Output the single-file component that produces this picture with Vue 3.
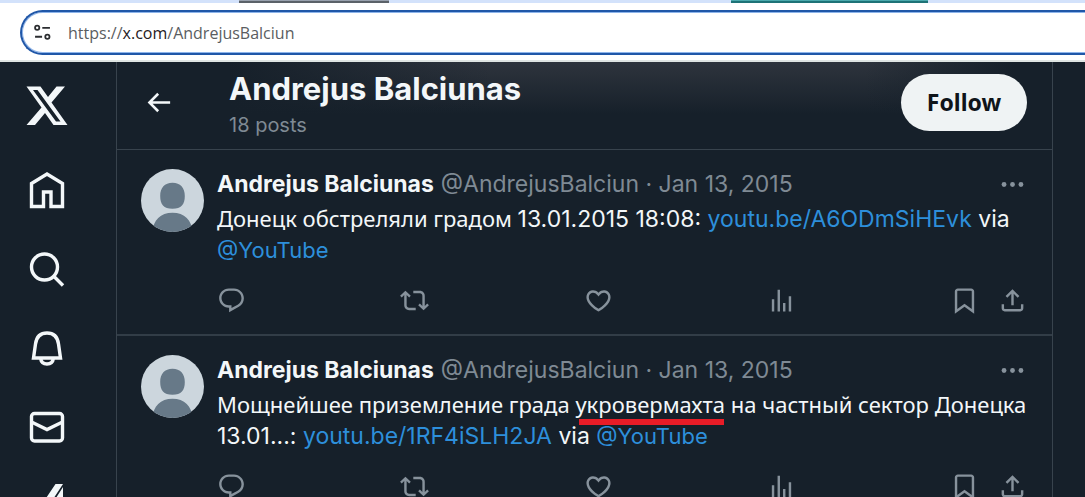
<script setup>
const icons = {
  reply: 'M1.751 10c0-4.42 3.584-8 8.005-8h4.366c4.49 0 8.129 3.64 8.129 8.13 0 2.96-1.607 5.68-4.196 7.11l-8.054 4.46v-3.69h-.067c-4.49.1-8.183-3.51-8.183-8.01zm8.005-6c-3.317 0-6.005 2.69-6.005 6 0 3.37 2.77 6.08 6.138 6.01l.351-.01h1.761v2.3l5.087-2.81c1.951-1.08 3.163-3.13 3.163-5.36 0-3.39-2.744-6.13-6.129-6.13H9.756z',
  repost: 'M4.5 3.88l4.432 4.14-1.364 1.46L5.5 7.55V16c0 1.1.896 2 2 2H13v2H7.5c-2.209 0-4-1.79-4-4V7.55L1.432 9.48.068 8.02 4.5 3.88zM16.5 6H11V4h5.5c2.209 0 4 1.79 4 4v8.45l2.068-1.93 1.364 1.46-4.432 4.14-4.432-4.14 1.364-1.46 2.068 1.93V8c0-1.1-.896-2-2-2z',
  like: 'M16.697 5.5c-1.222-.06-2.679.51-3.89 2.16l-.805 1.09-.806-1.09C9.984 6.01 8.526 5.44 7.304 5.5c-1.243.07-2.349.78-2.91 1.91-.552 1.12-.633 2.78.479 4.82 1.074 1.97 3.257 4.27 7.129 6.61 3.87-2.34 6.052-4.64 7.126-6.61 1.111-2.04 1.03-3.7.477-4.82-.561-1.13-1.666-1.84-2.908-1.91zm4.187 7.69c-1.351 2.48-4.001 5.12-8.379 7.67l-.503.3-.504-.3c-4.379-2.55-7.029-5.19-8.382-7.67-1.36-2.5-1.41-4.86-.514-6.67.887-1.79 2.647-2.91 4.601-3.01 1.651-.09 3.368.56 4.798 2.01 1.429-1.45 3.146-2.1 4.796-2.01 1.954.1 3.714 1.22 4.601 3.01.896 1.81.846 4.17-.514 6.67z',
  views: 'M8.75 21V3h2v18h-2zM18 21V8.5h2V21h-2zM4 21l.004-10h2L6 21H4zm9.248 0v-7h2v7h-2z',
  bookmark: 'M4 4.5C4 3.12 5.119 2 6.5 2h11C18.881 2 20 3.12 20 4.5v18.44l-8-5.71-8 5.71V4.5zM6.5 4c-.276 0-.5.22-.5.5v14.56l6-4.29 6 4.29V4.5c0-.28-.224-.5-.5-.5h-11z',
  share: 'M12 2.59l5.7 5.7-1.41 1.42L13 6.41V16h-2V6.41l-3.3 3.3-1.41-1.42L12 2.59zM21 15l-.02 3.51c0 1.38-1.12 2.49-2.5 2.49H5.5C4.11 21 3 19.88 3 18.5V15h2v3.5c0 .28.22.5.5.5h12.98c.28 0 .5-.22.5-.5L19 15h2z',
}
const actions = [
  ['Reply', 'reply'],
  ['Repost', 'repost'],
  ['Like', 'like'],
  ['Views', 'views'],
]
const saveActions = [
  ['Bookmark', 'bookmark'],
  ['Share', 'share'],
]
const posts = [
  {
    id: 1,
    parts: [
      { kind: 'cyr', text: 'Донецк обстреляли градом ' },
      { kind: 'num', text: '13.01.2015 18:08: ' },
      { kind: 'link', text: 'youtu.be/A6ODmSiHEvk' },
      { kind: 'num', text: ' via ' },
      { kind: 'link mention', text: '@YouTube' },
    ],
  },
  {
    id: 2,
    parts: [
      { kind: 'cyr', text: 'Мощнейшее приземление града ' },
      { kind: 'cyr marked', text: 'укровермахта' },
      { kind: 'cyr', text: ' на частный сектор Донецка ' },
      { kind: 'num', text: '13.01...: ' },
      { kind: 'link', text: 'youtu.be/1RF4iSLH2JA' },
      { kind: 'num', text: ' via ' },
      { kind: 'link mention', text: '@YouTube' },
    ],
  },
]
</script>

<template>
  <div class="window">
    <div class="tabs"><span class="tab gray"></span><span class="tab teal"></span></div>
    <div class="toolbar">
      <div class="address">
        <svg class="tune" viewBox="0 0 16 16" fill="none" stroke="#2b2d30" stroke-width="1.7" aria-hidden="true">
          <circle cx="3" cy="3.6" r="2" /><path d="M7.8 3.6H15M1 12h6.6" /><circle cx="12.6" cy="12" r="2" />
        </svg>
        <a class="url" href="#">https://<b>x.com</b>/AndrejusBalciun</a>
      </div>
    </div>
    <div class="app">
      <nav class="side" aria-label="Primary">
        <a class="logo" href="#" aria-label="X">
          <svg viewBox="0 0 44 44"><path fill-rule="evenodd" d="M1.500 2.500H15.500L23 13 31.500 2.500H40L26.500 18.500 42.500 41H28.500L20 29 10 41H1.500L16.500 23.500zM8 6 31 37.500h4.500L12.500 6z" /></svg>
        </a>
        <a href="#" aria-label="Home">
          <svg viewBox="0 0 44 44" class="line"><path d="M6.500 15.500 22 6l15.500 9.500V38.500H26V24h-7.500v14.500h-12z" /></svg>
        </a>
        <a href="#" aria-label="Search">
          <svg viewBox="0 0 44 44" class="line"><circle cx="19.500" cy="20" r="13" /><path d="M28.500 29 38 38.500" /></svg>
        </a>
        <a href="#" aria-label="Notifications">
          <svg viewBox="0 0 44 44" class="line"><path d="M8.500 32 10.500 18C11.500 10.500 16 7 22 7s10.500 3.500 11.500 11l2 14zM15.500 32c.5 3.700 3 6 6.500 6s6-2.300 6.500-6" /></svg>
        </a>
        <a href="#" aria-label="Messages">
          <svg viewBox="0 0 44 44" class="line"><rect x="6.500" y="8.500" width="31" height="27.500" rx="3" /><path d="M6.500 17 22 24.500 37.500 17" /></svg>
        </a>
        <a href="#" aria-label="Grok">
          <svg viewBox="0 0 44 44"><path d="M30.500 0H38L17 32H9zM38 3v29H19.500z" /></svg>
        </a>
      </nav>
      <main class="column">
        <header class="head">
          <button class="back" aria-label="Back">
            <svg viewBox="0 0 24 24"><path d="M7.414 13l5.043 5.040-1.414 1.420L3.586 12l7.457-7.460 1.414 1.420L7.414 11H21v2H7.414z" /></svg>
          </button>
          <div class="who">
            <h1>Andrejus Balciunas</h1>
            <p>18 posts</p>
          </div>
          <button class="follow">Follow</button>
        </header>
        <article v-for="post in posts" :key="post.id" class="post">
          <svg class="avatar" viewBox="0 0 64 64" role="img" aria-label="Andrejus Balciunas">
            <defs><clipPath :id="'face' + post.id"><circle cx="32" cy="32" r="32" /></clipPath></defs>
            <g :clip-path="'url(#face' + post.id + ')'">
              <rect width="64" height="64" fill="#ccd6dd" />
              <path fill="#677988" d="M32 14c8 0 12.500 5 12.500 13.500S41 40.500 32 40.500 19.500 36 19.500 27.500 24 14 32 14zM12 64c0-12 8-19.500 20-19.500S52 52 52 64z" />
            </g>
          </svg>
          <div class="content">
            <div class="meta">
              <a class="name" href="#">Andrejus Balciunas</a>
              <span class="handle">@AndrejusBalciun · Jan 13, 2015</span>
              <button class="more" aria-label="More">
                <svg viewBox="0 0 24 24"><circle cx="5" cy="12" r="2" /><circle cx="12" cy="12" r="2" /><circle cx="19" cy="12" r="2" /></svg>
              </button>
            </div>
            <p class="text"><template v-for="(p, i) in post.parts" :key="i"><a v-if="p.kind.startsWith('link')" :class="p.kind" href="#">{{ p.text }}</a><span v-else :class="p.kind">{{ p.text }}</span></template></p>
            <div class="actions">
              <button v-for="a in actions" :key="a[1]" :aria-label="a[0]"><svg viewBox="0 0 24 24"><path :d="icons[a[1]]" /></svg></button>
              <div class="saves">
                <button v-for="a in saveActions" :key="a[1]" :aria-label="a[0]"><svg viewBox="0 0 24 24"><path :d="icons[a[1]]" /></svg></button>
              </div>
            </div>
          </div>
        </article>
      </main>
    </div>
  </div>
</template>

<style>
html, body { margin: 0; background: #16202a; }
#app { height: 100vh; overflow: hidden; }
</style>

<style scoped>
.window { height: 100%; display: flex; flex-direction: column; overflow: hidden; font-family: Inter, "Liberation Sans", sans-serif; }
a { color: inherit; text-decoration: none; }
button { display: flex; align-items: center; justify-content: center; margin: 0; padding: 0; border: 0; background: none; color: inherit; cursor: pointer; }
svg { display: block; fill: currentColor; }
h1, p { margin: 0; }

.tabs { display: grid; grid-template-columns: 22% 150px 1fr 197px 14.5%; height: 3px; flex: none; background: #d3e2fb; }
.tab { box-sizing: border-box; border-top: 1px solid #98a1ae; background: #5b6269; }
.gray { grid-column: 2; }
.teal { grid-column: 4; border-color: #4ba9ad; background: #1e7377; }
.toolbar { flex: none; padding: 7px 0 5px 20px; background: #fff; border-bottom: 2px solid #dfe5e3; }
.address { display: flex; align-items: center; box-sizing: border-box; height: 45px; margin-right: -2px; padding-left: 12px; gap: 17px; border: 2px solid #2057a8; border-right: 0; border-radius: 23px 0 0 23px; box-shadow: inset 0 0 0 1px #8db4ea; }
.tune { width: 17px; height: 17px; fill: none; }
.url { font: 16px/24px "Open Sans", "Noto Sans", sans-serif; color: #5a5d61; }
.url b { font-weight: 400; color: #1f2023; }

.app { flex: 1; min-height: 0; display: flex; background: #16202a; color: #f3f7f9; }
.side { flex: none; width: 116px; box-sizing: border-box; padding: 22px 0 0 25px; display: flex; flex-direction: column; gap: 35px; }
.side svg { width: 44px; height: 44px; }
.side .line { fill: none; stroke: currentColor; stroke-width: 3.4; }
.logo { margin-bottom: 5px; }
.column { flex: 1; min-width: 0; margin-right: 32px; border: solid #38434d; border-width: 0 1px; height: max-content; }
.head { display: flex; align-items: center; box-sizing: border-box; height: 88px; padding: 0 25px 6px 26px; border-bottom: 1px solid #38434d; background: linear-gradient(to right, #16202a 12%, transparent 40%, transparent 80%, #16202a 96%), linear-gradient(#2e343d, #16202a 60%); }
.back svg { width: 31px; height: 31px; }
.who { flex: 1; margin-left: 55px; padding-top: 8px; }
.who h1 { font-size: 31px; line-height: 36px; font-weight: 700; }
.who p { font-size: 20px; line-height: 36px; color: #7f8a94; }
.follow { width: 126px; height: 57px; padding-bottom: 2px; border-radius: 29px; background: #eff3f4; color: #0f1419; font: 700 23px/30px "Noto Sans", sans-serif; }

.post { display: flex; gap: 13px; padding: 19px 25px 19px 24px; border-bottom: 2px solid #323d47; }
.avatar { flex: none; width: 63px; height: 63px; }
.content { flex: 1; min-width: 0; }
.meta { display: flex; gap: 7px; font-size: 23px; line-height: 31px; height: 31px; white-space: nowrap; }
.name { font-weight: 700; }
.handle { color: #7f8a94; }
.more { margin-left: auto; }
.more svg, .actions svg { width: 29px; height: 29px; }
.more, .actions { color: #87929c; }
.text { margin-top: 3px; font-size: 23px; line-height: 31px; }
.text a { color: #2d8fdb; }
.text .cyr { font-family: "Noto Sans", sans-serif; font-size: 22px; }
.text .mention { font-size: 22px; }
.marked { position: relative; }
.marked::after { content: ""; position: absolute; left: 4px; right: 1px; bottom: -6px; height: 6px; background: #e81c27; }
.actions { display: flex; justify-content: space-between; margin-top: 20px; }
.saves { display: flex; gap: 19px; }
</style>
